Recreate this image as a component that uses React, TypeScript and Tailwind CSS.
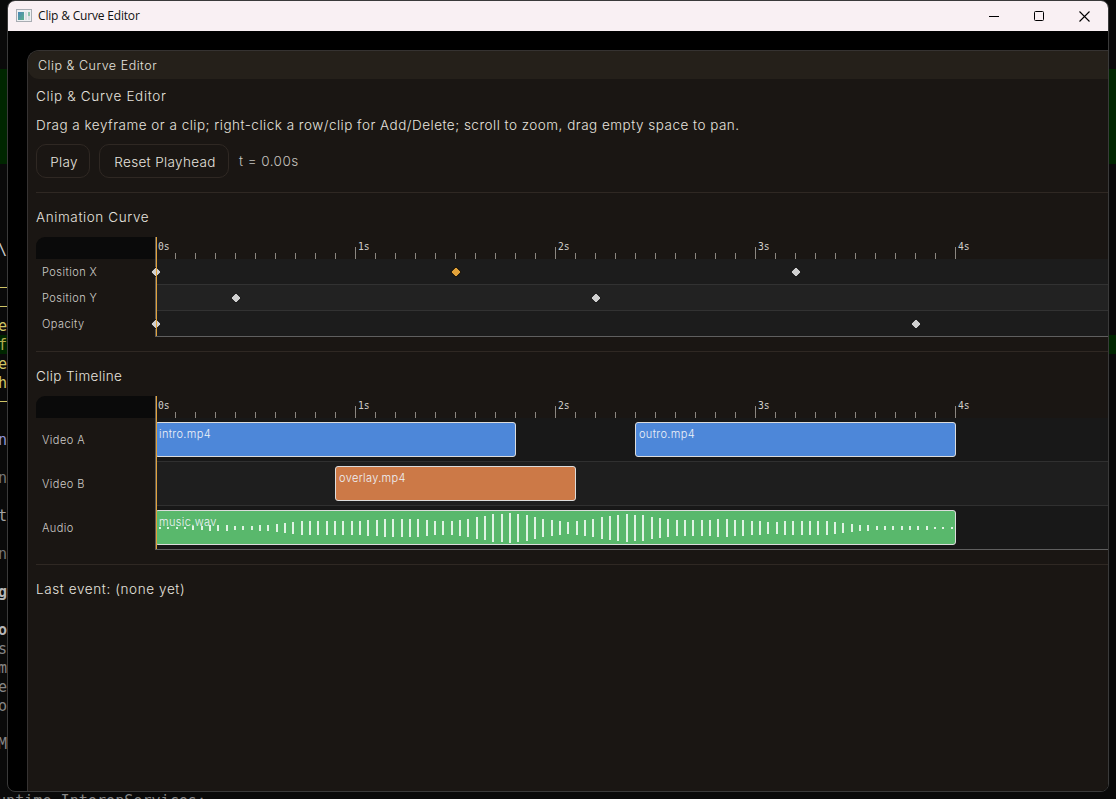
import type { ReactNode } from "react";

type TerminalRow = { text?: string; className?: string; rule?: boolean; green?: boolean };

const TERMINAL_ROWS: TerminalRow[] = [
  { text: "\\", className: "text-[#cccccc]" },
  {},
  { rule: true },
  { rule: true },
  { text: "e", className: "text-[#cfc566]" },
  { text: "f", className: "text-[#b5ad4e]", green: true },
  { text: "e", className: "text-[#cfc566]" },
  { text: "h", className: "text-[#cfc566]" },
  { rule: true },
  {},
  { text: "n", className: "text-[#8f95d8]" },
  {},
  { text: "n", className: "text-[#767676]" },
  {},
  { text: "t", className: "text-[#a5a5a5]" },
  {},
  { text: "n", className: "text-[#767676]" },
  {},
  { text: "g", className: "text-[#b5b5b5] font-bold" },
  {},
  { text: "o", className: "text-[#b5b5b5] font-bold" },
  { text: "s", className: "text-[#868686]" },
  { text: "m", className: "text-[#868686]" },
  { text: "e", className: "text-[#868686]" },
  { text: "o", className: "text-[#868686]" },
  {},
  { text: "M", className: "text-[#868686]" },
  {},
  {},
];

const CURVES = [
  { name: "Position X", keys: [{ t: 0 }, { t: 1.5, selected: true }, { t: 3.2 }] },
  { name: "Position Y", keys: [{ t: 0.4 }, { t: 2.2 }] },
  { name: "Opacity", keys: [{ t: 0 }, { t: 3.8 }] },
] as { name: string; keys: { t: number; selected?: boolean }[] }[];

const TRACKS = [
  {
    name: "Video A",
    clips: [
      { name: "intro.mp4", start: 0, end: 1.8, color: "bg-[#4d87d9]" },
      { name: "outro.mp4", start: 2.4, end: 4, color: "bg-[#4d87d9]" },
    ],
  },
  { name: "Video B", clips: [{ name: "overlay.mp4", start: 0.9, end: 2.1, color: "bg-[#cc7947]" }] },
  { name: "Audio", clips: [{ name: "music.wav", start: 0, end: 4, color: "bg-[#59b86c]", wave: true }] },
] as { name: string; clips: { name: string; start: number; end: number; color: string; wave?: boolean }[] }[];

const WAVE = [
  2, 2, 2, 2, 4, 4, 6, 6, 6, 4, 4, 4, 6, 6, 8, 10, 12, 14, 14, 14, 14, 14, 14, 14, 14, 16, 16, 18, 18, 18, 18, 18, 16,
  14, 14, 14, 16, 18, 22, 24, 28, 28, 30, 28, 26, 22, 18, 16, 14, 12, 14, 16, 18, 22, 24, 26, 28, 26, 26, 22, 20, 18,
  16, 16, 16, 16, 16, 18, 18, 16, 16, 14, 14, 12, 12, 14, 14, 14, 14, 14, 14, 12, 10, 8, 6, 6, 4, 4, 4, 4, 4, 4, 4, 2,
  2, 2,
];

const PX_PER_SECOND = 200;

function Terminal() {
  return (
    <div className="flex h-full w-full flex-col overflow-hidden bg-[#0a0a0a] font-['DejaVu_Sans_Mono',monospace] text-[15.1px]">
      <div className="h-[69px] shrink-0" />
      <div className="h-[95px] shrink-0 bg-[#002600]" />
      <div className="h-[76px] shrink-0" />
      {TERMINAL_ROWS.map((row, i) => (
        <div key={i} className={`flex h-[19px] shrink-0 items-center ${row.green ? "bg-[#002600]" : ""}`}>
          {row.rule && <div className="h-px w-[7px] bg-[#cfc566]" />}
          {row.text && <span className={`-ml-[2px] pt-[2px] leading-[19px] ${row.className}`}>{row.text}</span>}
        </div>
      ))}
      <div className="-ml-[3px] h-[19px] shrink-0 whitespace-pre leading-[21px] text-[#868686]">untime.InteropServices:</div>
    </div>
  );
}

function TitleBar() {
  return (
    <div className="flex h-[30px] shrink-0 items-center justify-between bg-[#f9f0f3] pl-2">
      <div className="flex items-center gap-[6px]">
        <svg width="16" height="14" viewBox="0 0 16 14" shapeRendering="crispEdges">
          <defs>
            <linearGradient id="pane" x1="0" y1="0" x2="1" y2="1">
              <stop offset="0" stopColor="#4a86b8" />
              <stop offset="1" stopColor="#5cb08a" />
            </linearGradient>
          </defs>
          <rect x="0.5" y="0.5" width="15" height="12" fill="#eef0f2" stroke="#a9adb3" />
          <rect x="2" y="3" width="6" height="8" fill="url(#pane)" />
          <rect x="9" y="3" width="2" height="8" fill="#dcdfe2" />
          <rect x="12" y="3" width="2" height="4" fill="#8fc4ae" />
          <rect x="12" y="7" width="2" height="4" fill="#dcdfe2" />
        </svg>
        <span className="font-['Open_Sans','Noto_Sans',sans-serif] text-[12px] leading-4 tracking-[-0.18px] text-[#111]">
          Clip &amp; Curve Editor
        </span>
      </div>
      <div className="flex items-center text-black">
        <div className="flex w-[45px] justify-center">
          <svg width="10" height="10" shapeRendering="crispEdges">
            <rect x="0" y="5" width="10" height="1" fill="currentColor" />
          </svg>
        </div>
        <div className="flex w-[45px] justify-center">
          <svg width="10" height="10">
            <rect x="0.5" y="0.5" width="9" height="9" rx="1" fill="none" stroke="currentColor" />
          </svg>
        </div>
        <div className="flex w-[47px] justify-center">
          <svg width="11" height="11">
            <path d="M0.5 0.5L10.5 10.5M10.5 0.5L0.5 10.5" stroke="currentColor" strokeWidth="1.1" />
          </svg>
        </div>
      </div>
    </div>
  );
}

function Heading({ className = "tracking-[0.6px]", children }: { className?: string; children: ReactNode }) {
  return <div className={`h-[22px] whitespace-nowrap text-[13.5px] leading-[21px] ${className}`}>{children}</div>;
}

function Separator() {
  return <div className="my-[14px] h-px bg-[#2f2823]" />;
}

function Ruler() {
  const ticks = Array.from({ length: 41 }, (_, i) => i);
  return (
    <div className="flex h-[22px]">
      <div className="w-[119px] rounded-tl-[9px] bg-[#0a0a0a]" />
      <svg width="953" height="22" shapeRendering="crispEdges">
        {ticks.map((i) => (
          <rect key={i} x={i * 20} y={i % 10 ? 16 : 10} width="1" height={i % 10 ? 6 : 12} fill="#8b8680" />
        ))}
        {[0, 1, 2, 3, 4].map((s) => (
          <text
            key={s}
            x={s * 200 + 3}
            y="13"
            fill="#d2cfcb"
            fontSize="9.7"
            fontFamily="'DejaVu Sans Mono', monospace"
          >
            {s}s
          </text>
        ))}
      </svg>
    </div>
  );
}

function Playhead() {
  return (
    <div className="absolute top-0 bottom-px left-[119px] flex">
      <div className="w-px bg-[#5c5c5c]" />
      <div className="w-px bg-[#e2a23a]" />
    </div>
  );
}

function RowLabel({ children }: { children: ReactNode }) {
  return (
    <div className="flex w-[119px] shrink-0 items-center pt-px pl-[6px] text-[11px] tracking-[0.45px] text-[#cfccc8]">
      {children}
    </div>
  );
}

function CurveEditor() {
  return (
    <div className="relative mt-2">
      <Ruler />
      {CURVES.map((curve, i) => (
        <div key={curve.name} className="flex h-[26px]">
          <RowLabel>{curve.name}</RowLabel>
          <div
            className={`relative flex-1 border-b border-l border-l-[#5c5c5c] ${i % 2 ? "bg-[#222222]" : "bg-[#1c1c1c]"} ${
              i === 2 ? "border-b-[#5f5f5f]" : "border-b-[#323232]"
            }`}
          >
            {curve.keys.map((k) => (
              <svg
                key={k.t}
                className="absolute top-[7px] z-10"
                style={{ left: k.t * PX_PER_SECOND - 6 }}
                width="12"
                height="12"
                viewBox="0 0 12 12"
              >
                <path
                  d="M5.3 1.5H6.7L10.5 5.3V6.7L6.7 10.5H5.3L1.5 6.7V5.3Z"
                  fill={k.selected ? "#e2a23a" : "#cfcfcf"}
                  stroke="#000"
                  strokeWidth="0.9"
                />
                {k.t === 0 && <rect x="6" y="0" width="1" height="12" fill="#e2a23a" />}
              </svg>
            ))}
          </div>
        </div>
      ))}
      <Playhead />
    </div>
  );
}

function ClipTimeline() {
  return (
    <div className="relative mt-2">
      <Ruler />
      {TRACKS.map((track, i) => (
        <div key={track.name} className="flex h-[44px]">
          <RowLabel>{track.name}</RowLabel>
          <div
            className={`relative flex-1 border-b border-l border-l-[#5c5c5c] ${i % 2 ? "bg-[#1e1e1e]" : "bg-[#181818]"} ${
              i === 2 ? "border-b-[#5f5f5f]" : "border-b-[#303030]"
            }`}
          >
            {track.clips.map((clip) => (
              <div
                key={clip.name}
                className={`absolute top-1 h-[35px] overflow-hidden rounded-[3px] border border-[#dcdcdc] ${clip.color}`}
                style={{
                  left: clip.start * PX_PER_SECOND - 1,
                  width: (clip.end - clip.start) * PX_PER_SECOND + 1,
                }}
              >
                <span className="block pl-[3px] text-[11px] leading-[22px] tracking-[0.35px] text-[#eef2f8]">
                  {clip.name}
                </span>
                {clip.wave && (
                  <svg className="absolute -top-px -left-px" width="800" height="35" shapeRendering="crispEdges">
                    {WAVE.map((h, n) => (
                      <rect key={n} x={Math.round(4 + n * (25 / 3))} y={18 - h / 2} width="2" height={h} fill="#dff3e3" />
                    ))}
                  </svg>
                )}
              </div>
            ))}
          </div>
        </div>
      ))}
      <Playhead />
    </div>
  );
}

function PillButton({ className, children }: { className: string; children: ReactNode }) {
  return (
    <button
      className={`flex h-[34px] items-center justify-center rounded-[10px] border border-[#2f2823] pt-[3px] pl-[2px] text-[13.5px] tracking-[0.35px] ${className}`}
    >
      {children}
    </button>
  );
}

export default function App() {
  return (
    <div className="relative h-[799px] w-[1116px] overflow-hidden bg-[#0a0a0a]">
      <div className="flex h-full">
        <div className="w-[1108px] shrink-0">
          <Terminal />
        </div>
        <div className="flex flex-1 flex-col pt-[69px]">
          <div className="h-[95px] bg-[#002600]" />
          <div className="mt-[171px] h-[19px] bg-[#002600]" />
        </div>
      </div>

      <div className="absolute top-0 left-[7px] flex h-[792px] w-[1102px] flex-col overflow-hidden rounded-[8px] border border-[#3a3a3a] bg-black">
        <TitleBar />
        <div className="flex min-h-0 flex-1 pt-[19px] pl-[19px]">
          <div className="flex min-w-0 flex-1 flex-col overflow-hidden rounded-tl-[12px] border-t border-l border-[#353231] bg-[#1a1613] font-['Inter',sans-serif] font-light text-[#e6e3df]">
            <div className="flex h-7 shrink-0 items-center rounded-l-[11px] bg-[#25201a] pt-[2px] pl-[10px] text-[12.5px] tracking-[0.52px]">
              Clip &amp; Curve Editor
            </div>
            <div className="flex flex-col pt-[7px] pl-2">
              <Heading className="tracking-[0.65px]">Clip &amp; Curve Editor</Heading>
              <div className="mt-[7px]">
                <Heading className="tracking-[0.49px]">
                  Drag a keyframe or a clip; right-click a row/clip for Add/Delete; scroll to zoom, drag empty space to
                  pan.
                </Heading>
              </div>
              <div className="mt-[7px] flex">
                <PillButton className="w-[54px]">Play</PillButton>
                <PillButton className="ml-[9px] w-[130px]">Reset Playhead</PillButton>
                <span className="ml-[10px] text-[13.5px] leading-[34px] tracking-[0.45px] text-[#c5c2be]">
                  t = 0.00s
                </span>
              </div>
              <Separator />
              <Heading>Animation Curve</Heading>
              <CurveEditor />
              <Separator />
              <Heading className="tracking-[0.37px]">Clip Timeline</Heading>
              <ClipTimeline />
              <Separator />
              <Heading>Last event: (none yet)</Heading>
            </div>
          </div>
        </div>
      </div>
    </div>
  );
}
